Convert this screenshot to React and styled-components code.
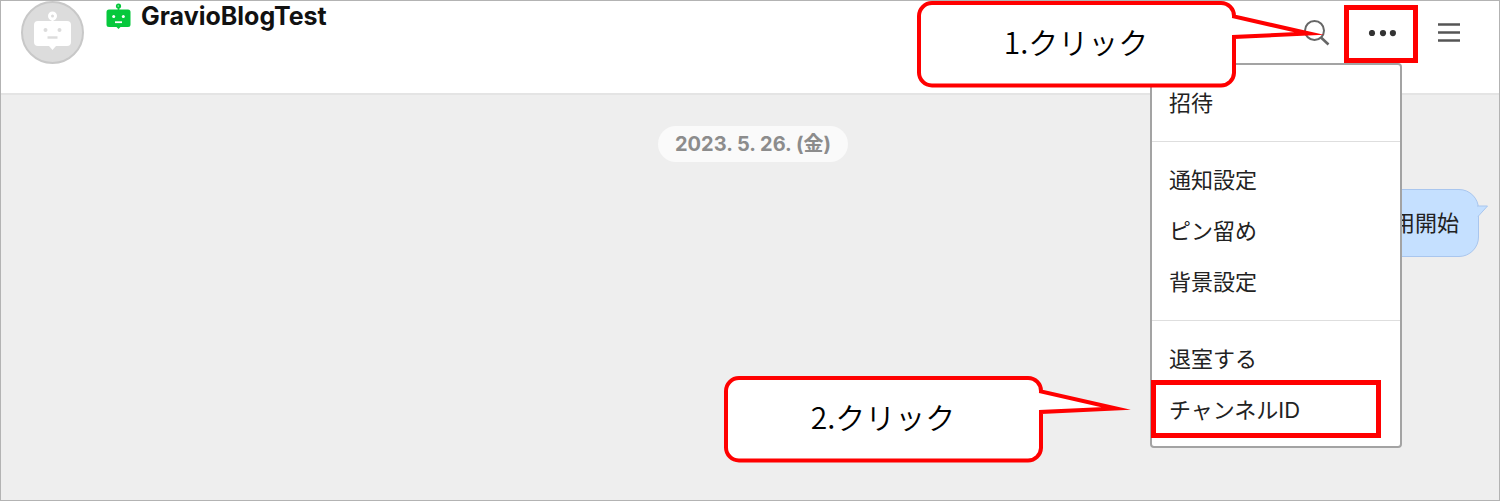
import React from 'react';
import styled, { createGlobalStyle } from 'styled-components';

const GlobalStyle = createGlobalStyle`
  * {
    box-sizing: border-box;
  }

  body {
    margin: 0;
    font-family: Inter, 'Noto Sans CJK JP', sans-serif;
    color: #222;
  }

  button {
    font: inherit;
    color: inherit;
    background: none;
    border: none;
    padding: 0;
    cursor: pointer;
  }
`;

const Page = styled.div`
  display: flex;
  flex-direction: column;
  min-height: 100vh;
  border: 1px solid #b3b3b3;
  background: #eee;
`;

const Header = styled.header`
  display: flex;
  align-items: flex-start;
  justify-content: space-between;
  min-height: 94px;
  padding: 0 35px 0 20px;
  background: #fff;
  border-bottom: 2px solid #e4e4e4;
`;

const Room = styled.div`
  display: flex;
  align-items: flex-start;
  gap: 22px;
`;

const Avatar = styled.div`
  width: 63px;
  height: 63px;
  border: 2px solid #c8c8c8;
  border-radius: 50%;
  background: #dcdcdc;
`;

const RoomName = styled.h1`
  display: flex;
  align-items: center;
  gap: 10px;
  margin: 0;
  font-size: 25px;
  font-weight: 700;
  line-height: 30px;
  color: #111;
`;

const Actions = styled.div`
  display: flex;
  align-items: center;
  gap: 14px;
  padding-top: 4px;
`;

const IconButton = styled.button`
  display: flex;
  align-items: center;
  justify-content: center;
  width: ${(props) => (props.$marked ? '74px' : '32px')};
  height: 58px;
  border: ${(props) => (props.$marked ? '5px solid #f00' : 'none')};
`;

const MoreArea = styled.div`
  position: relative;
`;

const Menu = styled.div`
  position: absolute;
  top: 100%;
  right: 16px;
  z-index: 1;
  width: 252px;
  background: #fff;
  border: 2px solid #a3a3a3;
  border-radius: 4px;
`;

const MenuGroup = styled.ul`
  list-style: none;
  margin: 0;
  padding: 13px 0 12px;

  & + & {
    border-top: 1px solid #dedede;
  }

  &:last-child {
    padding-bottom: 10px;
  }
`;

const MenuItem = styled.li`
  position: relative;
`;

const MenuButton = styled.button`
  display: block;
  width: 100%;
  padding: 0 17px;
  font-size: 22px;
  line-height: 51px;
  text-align: left;
`;

const ItemMark = styled.span`
  position: absolute;
  top: -5px;
  bottom: -2px;
  left: -1px;
  right: 19px;
  border: 5px solid #f00;
  pointer-events: none;
`;

const CalloutBox = styled.div`
  position: absolute;
  top: ${(props) => props.$top};
  right: ${(props) => props.$right};
  z-index: 2;
  width: 412px;
  height: 88px;
  pointer-events: none;
`;

const CalloutShape = styled.svg`
  display: block;
`;

const CalloutText = styled.p`
  position: absolute;
  top: 0;
  left: 0;
  width: 318px;
  margin: 0;
  font-family: 'Noto Sans CJK JP', sans-serif;
  font-size: 30px;
  font-weight: 350;
  line-height: 80px;
  text-align: center;
  color: #000;
`;

const Chat = styled.main`
  display: flex;
  flex-direction: column;
  flex: 1;
  gap: 27px;
  padding: 31px 20px 31px 26px;
`;

const DatePill = styled.time`
  align-self: center;
  padding: 0 17px;
  border-radius: 18px;
  background: #fafafa;
  font-size: 20px;
  font-weight: 700;
  line-height: 36px;
  color: #8c8c8c;
`;

const Bubble = styled.div`
  position: relative;
  align-self: flex-end;
  padding: 0 19px;
  border: 1px solid #a9c6ee;
  border-radius: 20px;
  background: #c5e0ff;
  font-size: 22px;
  line-height: 66px;
`;

const BubbleTail = styled.svg`
  position: absolute;
  top: 14px;
  right: -11px;
`;

function Callout({ top, right, children }) {
  return (
    <CalloutBox $top={top} $right={right}>
      <CalloutShape width="412" height="88" viewBox="0 0 412 88" aria-hidden="true">
        <path
          d="M15 2H304A13 13 0 0 1 317 15.5L392 32.5L317 36V72A13 13 0 0 1 304 84.5H15A13 13 0 0 1 2 71.5V15A13 13 0 0 1 15 2Z"
          fill="#fff"
          stroke="#f00"
          strokeWidth="4"
          strokeMiterlimit="20"
        />
      </CalloutShape>
      <CalloutText>{children}</CalloutText>
    </CalloutBox>
  );
}

function AvatarBot() {
  return (
    <svg width="59" height="59" viewBox="0 0 59 59" aria-hidden="true">
      <circle cx="29.5" cy="13" r="3" fill="none" stroke="#fff" strokeWidth="3" />
      <path d="M29.5 16V20" stroke="#fff" strokeWidth="2" />
      <path
        d="M15 18H44Q48 18 48 22V39Q48 43 44 43H33L29.5 47L26 43H15Q11 43 11 39V22Q11 18 15 18Z"
        fill="#fff"
      />
      <circle cx="22.5" cy="27" r="2" fill="#dcdcdc" />
      <circle cx="36.5" cy="27" r="2" fill="#dcdcdc" />
      <path d="M24.500 34.500H34.500" stroke="#dcdcdc" strokeWidth="2.400" />
    </svg>
  );
}

function GreenBot() {
  return (
    <svg width="25" height="26" viewBox="0 0 25 26" aria-hidden="true">
      <circle cx="12.5" cy="3" r="2.6" fill="#06c83c" />
      <circle cx="12.2" cy="3" r="0.7" fill="#b8f0c8" />
      <path d="M12.5 4V8" stroke="#06c83c" strokeWidth="1.6" />
      <path
        d="M3 6.500H22Q24.500 6.500 24.500 9V21.500Q24.500 24 22 24H14.500L12.500 26L10.500 24H3Q0.500 24 0.500 21.500V9Q0.500 6.500 3 6.500Z"
        fill="#06c83c"
      />
      <circle cx="7.700" cy="13.500" r="1.500" fill="#fff" />
      <circle cx="17.300" cy="13.500" r="1.500" fill="#fff" />
      <path d="M9 19.200H16" stroke="#fff" strokeWidth="1.800" />
    </svg>
  );
}

function SearchIcon() {
  return (
    <svg width="32" height="32" viewBox="0 0 32 32" fill="none" stroke="#666" aria-hidden="true">
      <circle cx="16.500" cy="12.500" r="9.500" strokeWidth="2" />
      <path d="M23 19.500L30.500 26.500" strokeWidth="2.600" />
    </svg>
  );
}

function DotsIcon() {
  return (
    <svg width="30" height="8" viewBox="0 0 30 8" fill="#333" aria-hidden="true">
      <circle cx="6" cy="3" r="3.100" />
      <circle cx="17" cy="3.100" r="3.100" />
      <circle cx="26.900" cy="3.100" r="3.100" />
    </svg>
  );
}

function LinesIcon() {
  return (
    <svg width="24" height="22" viewBox="0 0 24 22" stroke="#555" strokeWidth="2.400" aria-hidden="true">
      <path d="M2 1.500H24M2 9.500H24M2 17.500H24" />
    </svg>
  );
}

const menuGroups = [
  ['招待'],
  ['通知設定', 'ピン留め', '背景設定'],
  ['退室する', 'チャンネルID'],
];

function App() {
  return (
    <>
      <GlobalStyle />
      <Page>
        <Header>
          <Room>
            <Avatar>
              <AvatarBot />
            </Avatar>
            <RoomName>
              <GreenBot />
              GravioBlogTest
            </RoomName>
          </Room>
          <Actions>
            <IconButton type="button" aria-label="検索">
              <SearchIcon />
            </IconButton>
            <MoreArea>
              <IconButton type="button" aria-label="その他" $marked>
                <DotsIcon />
              </IconButton>
              <Menu>
                {menuGroups.map((items) => (
                  <MenuGroup key={items[0]}>
                    {items.map((item) => (
                      <MenuItem key={item}>
                        <MenuButton type="button">{item}</MenuButton>
                        {item === 'チャンネルID' && (
                          <>
                            <ItemMark />
                            <Callout top="-9px" right="264px">
                              2.クリック
                            </Callout>
                          </>
                        )}
                      </MenuItem>
                    ))}
                  </MenuGroup>
                ))}
              </Menu>
              <Callout top="-4px" right="89px">
                1.クリック
              </Callout>
            </MoreArea>
            <IconButton type="button" aria-label="メニュー">
              <LinesIcon />
            </IconButton>
          </Actions>
        </Header>
        <Chat>
          <DatePill dateTime="2023-05-26">2023. 5. 26. (金)</DatePill>
          <Bubble>
            利用開始
            <BubbleTail width="12" height="14" viewBox="0 0 12 14" aria-hidden="true">
              <path d="M0 2H10.500L1 12.500" fill="#c5e0ff" stroke="#a9c6ee" />
            </BubbleTail>
          </Bubble>
        </Chat>
      </Page>
    </>
  );
}

export default App;
